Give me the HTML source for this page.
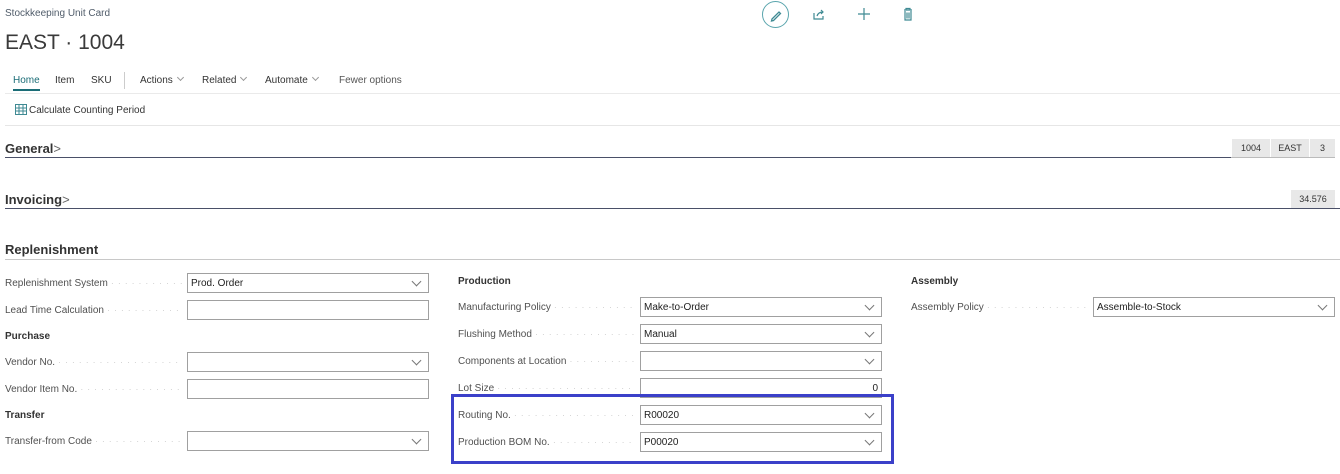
<!DOCTYPE html>
<html><head><style>
*{margin:0;padding:0;box-sizing:border-box}
body{width:1340px;height:474px;background:#fff;font-family:"Liberation Sans",sans-serif;position:relative;overflow:hidden;color:#212121}
.a{position:absolute;white-space:nowrap}
.lbl{font-size:10px;color:#505050;overflow:hidden}
.lbl::after{content:" · · · · · · · · · · · · · · · · · · · · · · · · · · · · · · · ·";color:#c4c4c4;font-size:8px;letter-spacing:1px}
.inp{position:absolute;height:20px;border:1px solid #a0a0a0;font-size:10px;padding:4px 3px;color:#212121}
.dd::after{content:"";position:absolute;right:8px;top:4px;width:6px;height:6px;border-right:1px solid #777;border-bottom:1px solid #777;transform:rotate(45deg)}
.h{font-size:10px;font-weight:bold;color:#333}
.sec{font-size:13px;font-weight:bold;color:#333}
.tag{position:absolute;background:#e8e8e8;font-size:9px;color:#333;text-align:center;line-height:18px;height:18px}
.chev{display:inline-block;width:5px;height:5px;border-right:1px solid #999;border-bottom:1px solid #999;transform:rotate(45deg);margin-left:5px;position:relative;top:-3px}
</style></head><body>
<div class="a" style="left:5px;top:8px;font-size:10px;color:#505c6a">Stockkeeping Unit Card</div>
<div class="a" style="left:5px;top:31px;font-size:21px;color:#3a3a3a">EAST · 1004</div>
<div class="a" style="left:762px;top:1px;width:27px;height:27px;border:1px solid #5aa5ad;border-radius:50%"></div>
<svg class="a" style="left:768px;top:7px" width="16" height="16"><path d="M4 12 L11 5 L12.5 6.5 L5.5 13.5 L3.5 14 Z" fill="none" stroke="#3f8a93" stroke-width="1.3"/></svg>
<svg class="a" style="left:812px;top:7px" width="14" height="14"><path d="M2 6v6h9v-3M5 9c1-3 3-4 6-4M9 3l2 2-2 2" fill="none" stroke="#3f8a93" stroke-width="1.2"/></svg>
<svg class="a" style="left:857px;top:7px" width="14" height="14"><path d="M7 1v12M1 7h12" stroke="#3f8a93" stroke-width="1.2"/></svg>
<svg class="a" style="left:902px;top:7px" width="12" height="14"><path d="M2 3h8M4 3V1.5h4V3M3 4v9h6V4M5 5.5v6M7 5.5v6" fill="none" stroke="#3f8a93" stroke-width="1.2"/></svg>

<div class="a" style="left:13px;top:75px;font-size:10px;color:#1b6d77">Home</div>
<div class="a" style="left:13px;top:89px;width:27px;height:2px;background:#1b6d77"></div>
<div class="a" style="left:55px;top:75px;font-size:10px;color:#333">Item</div>
<div class="a" style="left:91px;top:75px;font-size:10px;color:#333">SKU</div>
<div class="a" style="left:124px;top:72px;width:1px;height:17px;background:#ccc"></div>
<div class="a" style="left:140px;top:75px;font-size:10px;color:#333">Actions<span class="chev"></span></div>
<div class="a" style="left:202px;top:75px;font-size:10px;color:#333">Related<span class="chev"></span></div>
<div class="a" style="left:265px;top:75px;font-size:10px;color:#333">Automate<span class="chev"></span></div>
<div class="a" style="left:339px;top:75px;font-size:10px;color:#555">Fewer options</div>
<div class="a" style="left:5px;top:93px;width:1335px;height:1px;background:#eaeaea"></div>
<svg class="a" style="left:15px;top:104px" width="12" height="11"><rect x="0.5" y="0.5" width="11" height="10" fill="#fff" stroke="#3f8a93"/><path d="M0 4h12M0 7h12M4 0v11M8 0v11" stroke="#3f8a93"/></svg>
<div class="a" style="left:29px;top:105px;font-size:10px;color:#333">Calculate Counting Period</div>
<div class="a" style="left:5px;top:125px;width:1335px;height:1px;background:#e6e6e6"></div>

<div class="a sec" style="left:5px;top:141px">General<span style="font-weight:normal;color:#666">&gt;</span></div>
<div class="a" style="left:5px;top:157px;width:1226px;height:1px;background:#4a5068"></div>
<div class="a" style="left:1231px;top:157px;width:104px;height:1px;background:#bbb"></div>
<div class="tag" style="left:1232px;top:139px;width:38px">1004</div>
<div class="tag" style="left:1271px;top:139px;width:38px">EAST</div>
<div class="tag" style="left:1310px;top:139px;width:25px">3</div>

<div class="a sec" style="left:5px;top:192px">Invoicing<span style="font-weight:normal;color:#666">&gt;</span></div>
<div class="a" style="left:5px;top:208px;width:1335px;height:1px;background:#4a5068"></div>
<div class="tag" style="left:1291px;top:190px;width:44px">34.576</div>

<div class="a sec" style="left:5px;top:242px">Replenishment</div>
<div class="a" style="left:5px;top:259px;width:1335px;height:1px;background:#c8c8c8"></div>

<div class="a lbl" style="left:5px;top:278px;width:178px">Replenishment System</div>
<div class="inp dd" style="left:187px;top:273px;width:242px">Prod. Order</div>
<div class="a lbl" style="left:5px;top:305px;width:178px">Lead Time Calculation</div>
<div class="inp" style="left:187px;top:300px;width:242px"></div>
<div class="a h" style="left:5px;top:331px">Purchase</div>
<div class="a lbl" style="left:5px;top:357px;width:178px">Vendor No.</div>
<div class="inp dd" style="left:187px;top:352px;width:242px"></div>
<div class="a lbl" style="left:5px;top:384px;width:178px">Vendor Item No.</div>
<div class="inp" style="left:187px;top:379px;width:242px"></div>
<div class="a h" style="left:5px;top:410px">Transfer</div>
<div class="a lbl" style="left:5px;top:436px;width:178px">Transfer-from Code</div>
<div class="inp dd" style="left:187px;top:431px;width:242px"></div>

<div class="a h" style="left:458px;top:276px">Production</div>
<div class="a lbl" style="left:458px;top:302px;width:178px">Manufacturing Policy</div>
<div class="inp dd" style="left:640px;top:297px;width:242px">Make-to-Order</div>
<div class="a lbl" style="left:458px;top:329px;width:178px">Flushing Method</div>
<div class="inp dd" style="left:640px;top:324px;width:242px">Manual</div>
<div class="a lbl" style="left:458px;top:356px;width:178px">Components at Location</div>
<div class="inp dd" style="left:640px;top:351px;width:242px"></div>
<div class="a lbl" style="left:458px;top:383px;width:178px">Lot Size</div>
<div class="inp" style="left:640px;top:378px;width:242px;text-align:right">0</div>
<div class="a lbl" style="left:458px;top:410px;width:178px">Routing No.</div>
<div class="inp dd" style="left:640px;top:405px;width:242px">R00020</div>
<div class="a lbl" style="left:458px;top:437px;width:178px">Production BOM No.</div>
<div class="inp dd" style="left:640px;top:432px;width:242px">P00020</div>
<div class="a" style="left:451px;top:394px;width:443px;height:70px;border:3px solid #3b40c9"></div>

<div class="a h" style="left:911px;top:276px">Assembly</div>
<div class="a lbl" style="left:911px;top:302px;width:178px">Assembly Policy</div>
<div class="inp dd" style="left:1093px;top:297px;width:242px">Assemble-to-Stock</div>
</body></html>
